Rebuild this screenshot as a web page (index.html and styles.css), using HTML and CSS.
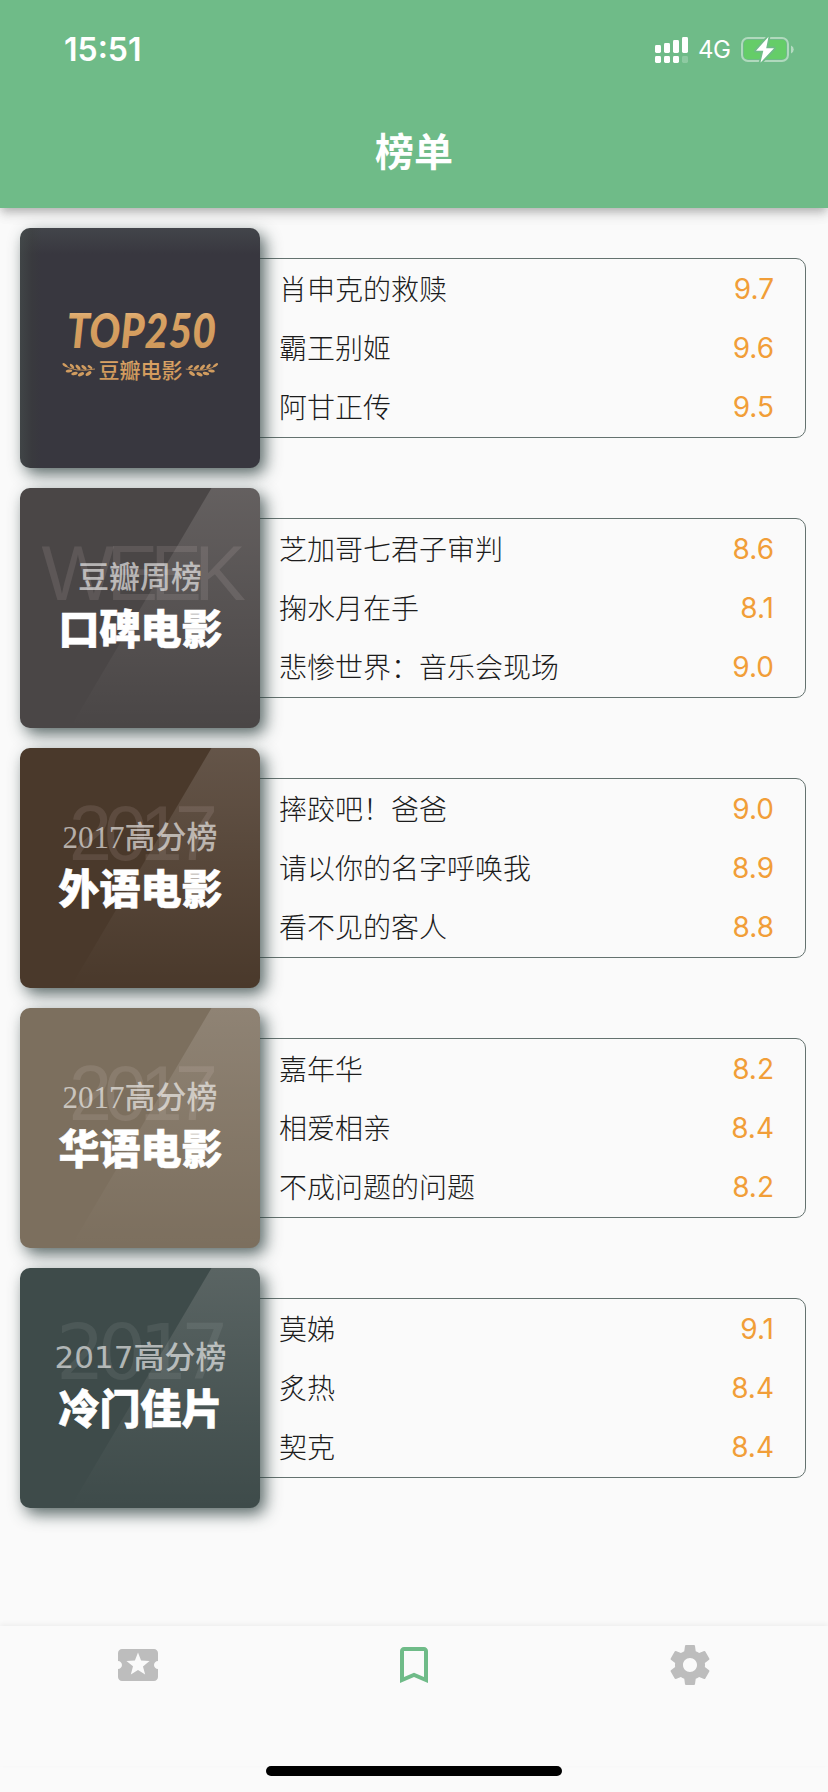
FILE: index.html
```html
<!DOCTYPE html>
<html lang="zh-CN">
<head>
<meta charset="utf-8">
<title>榜单</title>
<link rel="stylesheet" href="styles.css">
</head>
<body>
<svg class="defs" width="0" height="0" aria-hidden="true">
  <defs>
    <linearGradient id="sheen" x1="0" y1="0" x2="0" y2="1">
      <stop offset="0" stop-color="#fff8f6" stop-opacity=".145"/>
      <stop offset=".5" stop-color="#fff8f6" stop-opacity=".07"/>
      <stop offset="1" stop-color="#fff8f6" stop-opacity="0"/>
    </linearGradient>
    <linearGradient id="gold" x1="0" y1="0" x2="0" y2="1">
      <stop offset="0" stop-color="#f3d3a4"/>
      <stop offset=".3" stop-color="#d9a162"/>
      <stop offset="1" stop-color="#cd975a"/>
    </linearGradient>
    <symbol id="laurel" viewBox="0 0 33 14">
      <path d="M1 1.5Q12 10 33 6" fill="none" stroke="#cf9a5d" stroke-width=".9"/>
      <g fill="#d19c5f">
        <ellipse cx="3" cy="2.2" rx="3" ry="1.3" transform="rotate(35 3 2.2)"/>
        <ellipse cx="10" cy="3.2" rx="3" ry="1.4" transform="rotate(50 10 3.2)"/>
        <ellipse cx="16" cy="4.3" rx="3.2" ry="1.5" transform="rotate(48 16 4.3)"/>
        <ellipse cx="22" cy="4.4" rx="3.2" ry="1.5" transform="rotate(42 22 4.4)"/>
        <ellipse cx="28" cy="4" rx="2.8" ry="1.3" transform="rotate(35 28 4)"/>
        <ellipse cx="7" cy="8" rx="3.3" ry="1.4" transform="rotate(-8 7 8)"/>
        <ellipse cx="12.5" cy="10.5" rx="3.3" ry="1.6" transform="rotate(-15 12.5 10.5)"/>
        <ellipse cx="19" cy="11.3" rx="3.3" ry="1.7" transform="rotate(-25 19 11.3)"/>
        <ellipse cx="26.5" cy="10.6" rx="3.3" ry="1.7" transform="rotate(-35 26.5 10.6)"/>
      </g>
    </symbol>
  </defs>
</svg>
<div class="screen">
  <header class="header">
    <div class="status">
      <span class="time">15:51</span>
      <div class="status-icons">
        <svg class="signal" width="33" height="26" viewBox="0 0 33 26" fill="#fff">
          <rect x="0" y="8" width="6" height="8" rx="1.4"/>
          <rect x="9" y="6" width="6" height="10" rx="1.4"/>
          <rect x="18" y="3" width="6" height="13" rx="1.4"/>
          <rect x="27" y="0" width="6" height="16" rx="1.4"/>
          <rect x="0" y="19" width="6" height="7" rx="1.4"/>
          <rect x="9" y="19" width="6" height="7" rx="1.4"/>
          <rect x="18" y="19" width="6" height="7" rx="1.4"/>
          <rect x="27" y="19" width="6" height="7" rx="1.4" opacity=".22"/>
        </svg>
        <span class="network">4G</span>
        <svg class="battery" width="54" height="28" viewBox="0 0 54 28">
          <rect x="1" y="2" width="46" height="23" rx="6" fill="none" stroke="#fff" stroke-opacity=".45" stroke-width="2"/>
          <rect x="3" y="4" width="42" height="19" rx="3.5" fill="#65cd68"/>
          <path d="M50 9.5a4.3 4.3 0 0 1 0 8z" fill="#fff" fill-opacity=".48"/>
          <path d="M27.5.8 15 14.7h7.3L19.5 26.6 33 12.3h-7.8z" fill="#fff" stroke="#6fbb88" stroke-width="3.6" stroke-linejoin="round" paint-order="stroke"/>
        </svg>
      </div>
    </div>
    <h1 class="title">榜单</h1>
  </header>

  <main class="list">
    <section class="rank">
      <div class="poster poster-top">
        <svg viewBox="0 0 240 240">
          <text class="top-title" x="47" y="119.500" textLength="149" lengthAdjust="spacingAndGlyphs" fill="url(#gold)">TOP250</text>
          <text class="top-sub" x="78.5" y="149.500" fill="url(#gold)">豆瓣电影</text>
          <use href="#laurel" x="42" y="135" width="33" height="14"/>
          <use href="#laurel" width="33" height="14" transform="translate(198.5 135) scale(-1 1)"/>
        </svg>
      </div>
      <ul class="films">
        <li><span>肖申克的救赎</span><b>9.7</b></li>
        <li><span>霸王别姬</span><b>9.6</b></li>
        <li><span>阿甘正传</span><b>9.5</b></li>
      </ul>
    </section>

    <section class="rank">
      <div class="poster poster-week">
        <svg viewBox="0 0 240 240">
          <path d="M191.5 0H240V240H50z" fill="url(#sheen)"/>
          <text class="ghost" x="21.500" y="112">WEEK</text>
          <text class="sub" x="120" y="100">豆瓣周榜</text>
          <text class="main" x="120.5" y="155.500">口碑电影</text>
        </svg>
      </div>
      <ul class="films">
        <li><span>芝加哥七君子审判</span><b>8.6</b></li>
        <li><span>掬水月在手</span><b>8.1</b></li>
        <li><span>悲惨世界：音乐会现场</span><b>9.0</b></li>
      </ul>
    </section>

    <section class="rank">
      <div class="poster poster-foreign">
        <svg viewBox="0 0 240 240">
          <path d="M191.5 0H240V240H50z" fill="url(#sheen)"/>
          <text class="ghost" x="49" y="112">2017</text>
          <text class="sub" x="120" y="100">2017高分榜</text>
          <text class="main" x="120.5" y="155.500">外语电影</text>
        </svg>
      </div>
      <ul class="films">
        <li><span>摔跤吧！爸爸</span><b>9.0</b></li>
        <li><span>请以你的名字呼唤我</span><b>8.9</b></li>
        <li><span>看不见的客人</span><b>8.8</b></li>
      </ul>
    </section>

    <section class="rank">
      <div class="poster poster-chinese">
        <svg viewBox="0 0 240 240">
          <path d="M191.5 0H240V240H50z" fill="url(#sheen)"/>
          <text class="ghost" x="49" y="112">2017</text>
          <text class="sub" x="120" y="100">2017高分榜</text>
          <text class="main" x="120.5" y="155.500">华语电影</text>
        </svg>
      </div>
      <ul class="films">
        <li><span>嘉年华</span><b>8.2</b></li>
        <li><span>相爱相亲</span><b>8.4</b></li>
        <li><span>不成问题的问题</span><b>8.2</b></li>
      </ul>
    </section>

    <section class="rank">
      <div class="poster poster-niche">
        <svg viewBox="0 0 240 240">
          <path d="M191.5 0H240V240H50z" fill="url(#sheen)"/>
          <text class="ghost ghost-wide" x="36" y="111">2017</text>
          <text class="sub sub-wide" x="120.500" y="100">2017高分榜</text>
          <text class="main" x="120.5" y="155.500">冷门佳片</text>
        </svg>
      </div>
      <ul class="films">
        <li><span>莫娣</span><b>9.1</b></li>
        <li><span>炙热</span><b>8.4</b></li>
        <li><span>契克</span><b>8.4</b></li>
      </ul>
    </section>
  </main>

  <nav class="tabs">
    <a class="tab">
      <svg viewBox="0 0 24 24"><path d="M20 12c0-1.1.9-2 2-2V6c0-1.100-.9-2-2-2H4c-1.100 0-1.990.9-1.990 2v4c1.100 0 1.990.9 1.990 2s-.89 2-2 2v4c0 1.100.9 2 2 2h16c1.100 0 2-.9 2-2v-4c-1.100 0-2-.9-2-2zm-4.420 4.800L12 14.500l-3.580 2.300 1.080-4.120-3.290-2.690 4.240-.25L12 5.800l1.540 3.950 4.240.25-3.290 2.690 1.090 4.110z"/></svg>
    </a>
    <a class="tab tab-active">
      <svg viewBox="0 0 24 24"><path d="M17 3H7c-1.100 0-1.990.9-1.990 2L5 21l7-3 7 3V5c0-1.100-.9-2-2-2zm0 15l-5-2.180L7 18V5h10v13z"/></svg>
    </a>
    <a class="tab">
      <svg viewBox="0 0 24 24"><path d="M19.430 12.980c.04-.32.07-.64.07-.98s-.03-.66-.07-.98l2.110-1.650c.19-.15.24-.42.12-.64l-2-3.460c-.12-.22-.39-.3-.61-.22l-2.490 1c-.52-.4-1.080-.73-1.690-.98l-.38-2.650C14.460 2.180 14.250 2 14 2h-4c-.25 0-.46.18-.49.42l-.38 2.650c-.61.25-1.170.59-1.690.98l-2.490-1c-.23-.09-.49 0-.61.22l-2 3.460c-.13.22-.07.49.12.64l2.110 1.650c-.04.32-.07.65-.07.98s.03.66.07.98l-2.110 1.650c-.19.15-.24.42-.12.64l2 3.460c.12.22.39.3.61.22l2.490-1c.52.4 1.080.73 1.690.98l.38 2.650c.03.24.24.42.49.42h4c.25 0 .46-.18.49-.42l.38-2.650c.61-.25 1.170-.59 1.690-.98l2.490 1c.23.09.49 0 .61-.22l2-3.460c.12-.22.07-.49-.12-.64l-2.110-1.650zM12 15.500c-1.930 0-3.500-1.570-3.500-3.500s1.570-3.500 3.500-3.500 3.500 1.570 3.500 3.500-1.570 3.500-3.500 3.500z"/></svg>
    </a>
  </nav>
  <div class="home-bar"></div>
</div>
</body>
</html>
```

FILE: styles.css
```css
* { box-sizing: border-box; }

body {
  margin: 0;
  background: #fafafa;
  font-family: Inter, "Noto Sans CJK SC", sans-serif;
}

.defs { position: absolute; }

.screen {
  width: 828px;
  height: 1792px;
  display: flex;
  flex-direction: column;
  overflow: hidden;
}

.header {
  height: 208px;
  flex: none;
  background: #6fbb88;
  color: #fff;
  box-shadow: 0 4px 8px -2px rgba(0, 0, 0, .2), 0 8px 10px rgba(0, 0, 0, .08), 0 2px 16px rgba(0, 0, 0, .1);
}

.status {
  height: 96px;
  padding: 4px 33px 0 64px;
  display: flex;
  align-items: center;
  justify-content: space-between;
}

.time {
  font-size: 32px;
  font-weight: 600;
  line-height: 40px;
}

.status-icons {
  display: flex;
  align-items: center;
}

.network {
  width: 34px;
  margin: 0 9px 0 10px;
  font-size: 24px;
  line-height: 28px;
  letter-spacing: -.5px;
}

.title {
  margin: 0;
  height: 106px;
  line-height: 106px;
  text-align: center;
  font-family: "Noto Sans CJK SC", sans-serif;
  font-size: 39px;
  font-weight: 700;
}

.list {
  flex: 1;
  padding: 20px 22px 0 20px;
  display: flex;
  flex-direction: column;
  gap: 20px;
}

.rank {
  height: 240px;
  display: flex;
  align-items: center;
}

.poster {
  z-index: 1;
  width: 240px;
  height: 240px;
  flex: none;
  border-radius: 10px;
  overflow: hidden;
  box-shadow: 5px 6px 16px rgba(42, 62, 60, .78);
}

.poster svg { display: block; width: 240px; height: 240px; }

.poster-top {
  background:
    linear-gradient(90deg, rgba(70, 78, 76, .6), rgba(60, 64, 60, .3) 5%, transparent 9%),
    linear-gradient(180deg, rgba(72, 76, 80, .65), transparent 11%),
    #38373f;
}
.poster-week { background: #4a4646; }
.poster-foreign { background: #4a392b; }
.poster-chinese { background: #7c6f5e; }
.poster-niche { background: #3e4b4a; }

.ghost {
  font: 77px "Liberation Sans", sans-serif;
  letter-spacing: -7.5px;
  fill: rgba(255, 240, 240, .105);
}
.ghost-wide {
  font-family: "DejaVu Sans", sans-serif;
  fill: rgba(255, 255, 255, .075);
}

.sub {
  font: 500 31px "Liberation Serif", "Noto Sans CJK SC", serif;
  text-anchor: middle;
  fill: rgba(255, 255, 255, .6);
}
.sub-wide { font-family: "DejaVu Sans", "Noto Sans CJK SC", sans-serif; }

.main {
  font: 900 41px "Noto Sans CJK SC", sans-serif;
  text-anchor: middle;
  fill: #fff;
  stroke: #fff;
  stroke-width: .6px;
}

.top-title { font: italic 900 47px Lato, sans-serif; }
.top-sub { font: 500 21px "Noto Sans CJK SC", sans-serif; }

.films {
  flex: 1;
  height: 180px;
  margin: 0 0 0 -10px;
  padding: 0 31px 0 28px;
  list-style: none;
  border: 1px solid #64726f;
  border-radius: 10px;
  display: flex;
  flex-direction: column;
}

.films li {
  height: 59px;
  display: flex;
  align-items: center;
  justify-content: space-between;
  font-size: 28px;
  line-height: 40px;
  color: #1c1c1c;
}

.films span {
  height: 42px;
  font-family: "Noto Sans CJK SC", sans-serif;
  font-weight: 300;
}

.films b {
  font-weight: 400;
  color: #f19e38;
}

.tabs {
  height: 140px;
  flex: none;
  padding-top: 15px;
  display: grid;
  grid-template-columns: repeat(3, 1fr);
  justify-items: center;
  align-items: start;
  box-shadow: 0 -2px 5px rgba(0, 0, 0, .05);
}

.tab { color: #bdbdbd; }
.tab-active { color: #6fbb88; }
.tab svg { display: block; width: 48px; height: 48px; fill: currentColor; }

.home-bar {
  width: 296px;
  height: 10px;
  flex: none;
  margin: 0 auto 16px;
  border-radius: 5px;
  background: #000;
}
```
